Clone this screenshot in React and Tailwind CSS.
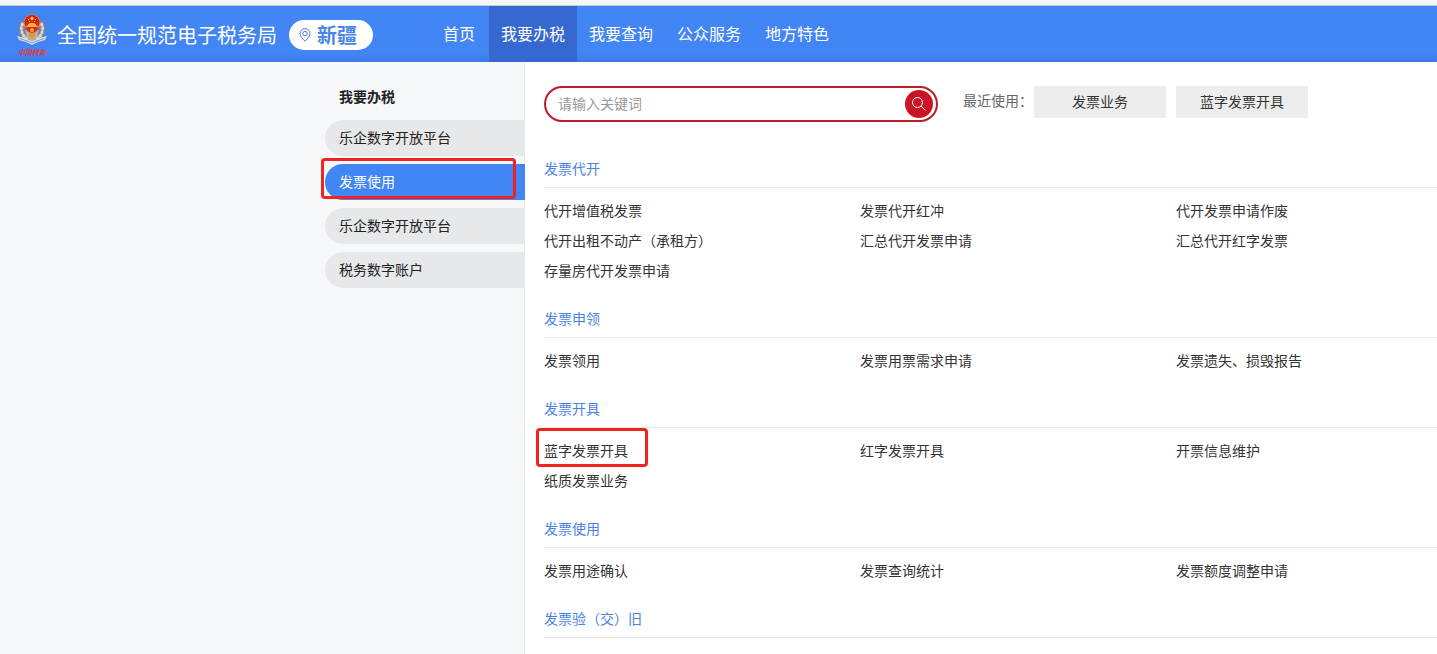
const NAV_ITEMS = ["首页", "我要办税", "我要查询", "公众服务", "地方特色"];

const SIDE_ITEMS = ["乐企数字开放平台", "发票使用", "乐企数字开放平台", "税务数字账户"];

const SECTIONS = [
  {
    title: "发票代开",
    links: [
      "代开增值税发票",
      "发票代开红冲",
      "代开发票申请作废",
      "代开出租不动产（承租方）",
      "汇总代开发票申请",
      "汇总代开红字发票",
      "存量房代开发票申请",
    ],
  },
  {
    title: "发票申领",
    links: ["发票领用", "发票用票需求申请", "发票遗失、损毁报告"],
  },
  {
    title: "发票开具",
    links: ["蓝字发票开具", "红字发票开具", "开票信息维护", "纸质发票业务"],
    marked: "蓝字发票开具",
  },
  {
    title: "发票使用",
    links: ["发票用途确认", "发票查询统计", "发票额度调整申请"],
  },
  { title: "发票验（交）旧", links: [] },
];

export default function App() {
  return (
    <div className="flex min-h-screen flex-col overflow-x-hidden bg-white font-['Noto_Sans_CJK_SC',sans-serif] text-sm text-[#333333]">
      <div className="h-1.5 border-b border-[#c3cbdc] bg-[#f5f6f8]" />
      <Header />
      <div className="flex flex-1">
        <Sidebar />
        <main className="min-w-0 flex-1 pt-6 pl-[19px]">
          <SearchRow />
          <div className="mt-[30px]">
            {SECTIONS.map((section) => (
              <Section key={section.title} {...section} />
            ))}
          </div>
        </main>
      </div>
    </div>
  );
}

function Header() {
  return (
    <header className="flex h-14 items-center bg-linear-to-b from-[#4285f4] from-85% to-[#3c7ae4] text-white">
      <div className="flex w-[431px] shrink-0 items-center pt-0.5 pl-4">
        <Emblem />
        <h1 className="ml-2 text-xl whitespace-nowrap">全国统一规范电子税务局</h1>
        <button
          type="button"
          className="ml-3 flex h-[30px] w-[84px] items-center gap-1.5 rounded-full bg-white pl-2.5 text-xl font-bold text-[#4a86e8]"
        >
          <PinIcon />
          新疆
        </button>
      </div>
      <nav className="flex h-full">
        {NAV_ITEMS.map((item) => (
          <a
            key={item}
            href="#"
            className={`flex h-full min-w-[58px] items-center px-3 pb-0.5 text-base whitespace-nowrap ${
              item === "我要办税" ? "bg-[#3569cf]" : ""
            }`}
          >
            {item}
          </a>
        ))}
      </nav>
    </header>
  );
}

function Sidebar() {
  return (
    <aside className="w-[525px] shrink-0 border-r border-[#e6eaf0] bg-[#f7f8fb] pt-6">
      <h2 className="pl-[339px] leading-5 font-bold text-[#222222]">我要办税</h2>
      <ul className="mt-3.5 -mr-px ml-[325px] flex flex-col gap-2">
        {SIDE_ITEMS.map((item, i) => {
          const active = item === "发票使用";
          return (
            <li key={i} className="relative">
              <a
                href="#"
                className={`flex h-9 items-center rounded-l-full pb-0.5 pl-3.5 ${
                  active ? "bg-[#4285f4] text-white" : "bg-[#e7e8e9] text-[#222222]"
                }`}
              >
                {item}
              </a>
              {active && (
                <span className="pointer-events-none absolute -top-1.5 -left-1 h-[41px] w-[195px] rounded-sm border-3 border-[#ee2420]" />
              )}
            </li>
          );
        })}
      </ul>
    </aside>
  );
}

function SearchRow() {
  return (
    <div className="flex items-start">
      <form className="flex h-9 w-[394px] shrink-0 items-center rounded-full border-2 border-[#bd1c2b] pr-[3px] pl-3">
        <input
          type="text"
          aria-label="请输入关键词"
          placeholder="请输入关键词"
          className="min-w-0 flex-1 pb-0.5 outline-none placeholder:text-[#999999]"
        />
        <button
          type="button"
          aria-label="搜索"
          className="flex size-7 items-center justify-center rounded-full bg-[#cb1427] text-white"
        >
          <SearchIcon />
        </button>
      </form>
      <span className="mr-px ml-[25px] leading-7 whitespace-nowrap text-[#666666]">最近使用：</span>
      <div className="flex gap-2.5">
        <button type="button" className="h-8 w-[132px] bg-[#ededed] pb-0.5">
          发票业务
        </button>
        <button type="button" className="h-8 w-[132px] bg-[#ededed] pb-0.5">
          蓝字发票开具
        </button>
      </div>
    </div>
  );
}

function Section({ title, links, marked }) {
  return (
    <section className="pb-4">
      <h3 className="h-9 border-b border-[#e8e8e8] leading-8 text-[#4a82e4]">{title}</h3>
      {links.length > 0 && (
        <ul className="grid grid-cols-[316px_316px_1fr] pt-[7px] pb-px">
          {links.map((link) => (
            <li key={link} className="leading-[30px] whitespace-nowrap">
              <a href="#" className="relative inline-block">
                {link}
                {link === marked && (
                  <span className="pointer-events-none absolute -top-[7px] -left-2 h-[39px] w-28 rounded-sm border-3 border-[#ee2420]" />
                )}
              </a>
            </li>
          ))}
        </ul>
      )}
    </section>
  );
}

function SearchIcon() {
  return (
    <svg width="16" height="16" viewBox="0 0 16 16" fill="none" stroke="currentColor" strokeWidth="1">
      <circle cx="6.5" cy="6.5" r="5" />
      <path d="M10.2 10.2 14 14" strokeLinecap="round" />
    </svg>
  );
}

function PinIcon() {
  return (
    <svg width="12" height="14" viewBox="0 0 12 14" fill="none" stroke="#4a7bd0" strokeWidth="1">
      <path d="M6 13.2C3.2 10.3 1 8 1 5.6a5 5 0 0 1 10 0C11 8 8.8 10.3 6 13.2Z" />
      <circle cx="6" cy="5.6" r="2.2" />
    </svg>
  );
}

// Tax bureau badge: national emblem over silver wheat ears and a ribbon
function Emblem() {
  return (
    <svg width="33" height="46" viewBox="0 0 33 46" aria-label="中国税务" role="img">
      <g fill="none" strokeLinecap="round">
        <path d="M6.5 12C4 17 5.500 23 12 28" stroke="#85847f" strokeWidth="5" />
        <path d="M25.5 12C28 17 26.500 23 20 28" stroke="#85847f" strokeWidth="5" />
        <path d="M6.5 12C4 17 5.500 23 12 28" stroke="#ddd8cc" strokeWidth="3" strokeDasharray="1 3" />
        <path d="M25.5 12C28 17 26.500 23 20 28" stroke="#ddd8cc" strokeWidth="3" strokeDasharray="1 3" />
      </g>
      <path d="M9 18h14l-2 8-5 3-5-3Z" fill="#b7b3aa" />
      <path d="M12 19h8l-1 6-3 2-3-2Z" fill="#d99a45" />
      <path d="M1 24 9 26 16 29 23 26 31 24 29 28 22 30 16 33 10 30 3 28Z" fill="#d8dce2" />
      <path d="M4 26.500 11 29 16 31 21 29 28 26.500" fill="none" stroke="#929aa8" strokeWidth="1" />
      <circle cx="16" cy="11" r="8.500" fill="#e9822b" />
      <circle cx="16" cy="10.500" r="7.500" fill="#dc1f1d" />
      <path d="M16 4 16.700 5.700H18.500L17.100 6.800 17.600 8.500 16 7.500 14.400 8.500 14.900 6.800 13.500 5.700H15.300Z" fill="#ffd84a" />
      <path d="M12 7h1v1h-1ZM19 7h1v1h-1ZM13 9h1v1h-1ZM18 9h1v1h-1Z" fill="#ffd84a" />
      <path d="M12 12 16 10.500 20 12V13.500H21.500V15H10.500V13.500H12Z" fill="#f9b936" />
      <path d="M9 15c3 3 11 3 14 0l-2 4-5 2-5-2Z" fill="#d6281e" />
      <circle cx="16" cy="18" r="2" fill="#f6a92f" />
      <text
        x="16"
        y="43"
        textAnchor="middle"
        className="fill-[#dd3a3e] font-['Noto_Sans_CJK_SC',sans-serif] text-[7px] font-bold italic"
      >
        中国税务
      </text>
    </svg>
  );
}
